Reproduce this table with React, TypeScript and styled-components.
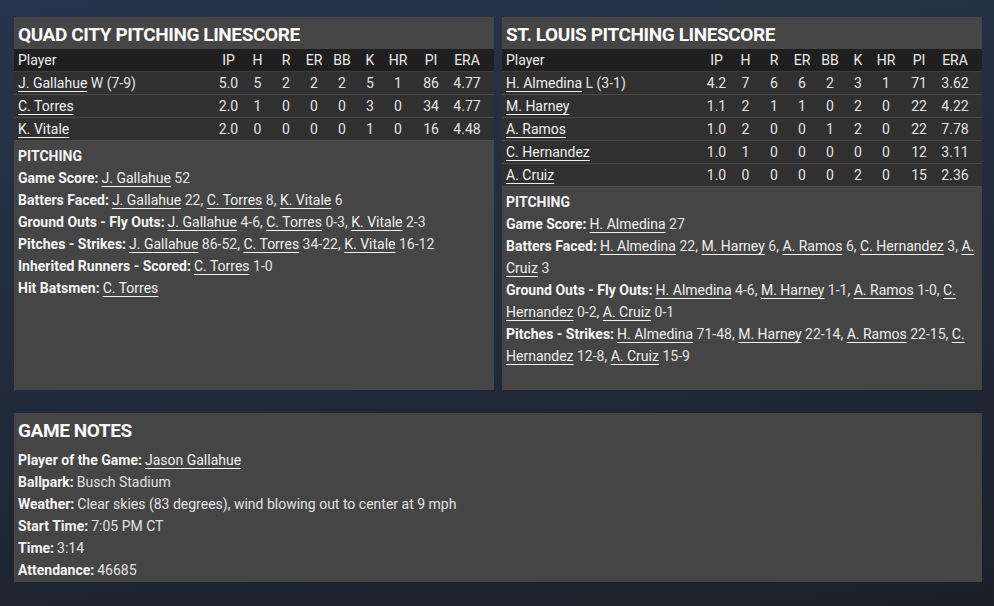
import React from 'react';
import styled, { createGlobalStyle } from 'styled-components';

const GlobalStyle = createGlobalStyle`
  html, body {
    margin: 0;
    padding: 0;
    height: 100%;
  }
  body {
    background: linear-gradient(170deg, #27344b 0%, #222c3d 45%, #1b1f27 100%);
    font-family: Roboto, "Noto Sans", sans-serif;
    color: #e4e4e4;
  }
`;

const Page = styled.div`
  width: 968px;
  padding: 17px 12px 24px 14px;
`;

const TopRow = styled.div`
  display: grid;
  grid-template-columns: 480px 480px;
  gap: 8px;
  align-items: stretch;
`;

const Panel = styled.section`
  background: #454545;
  display: flex;
  flex-direction: column;
`;

const NotesPanel = styled(Panel)`
  margin-top: 23px;
`;

const Title = styled.h2`
  margin: 0;
  height: 29px;
  line-height: 29px;
  padding: 3px 4px 0;
  font-size: 19px;
  font-weight: 700;
  color: #fafafa;
  letter-spacing: -0.4px;
`;

const StatRow = styled.div<{ $head?: boolean }>`
  display: grid;
  grid-template-columns: 1fr 29px 29px 28px 28px 28px 28px 28px 38px 34px;
  height: 22px;
  line-height: 23px;
  padding: 0 10px 0 4px;
  font-size: 14px;
  background: ${(p) => (p.$head ? '#1f1f1f' : '#303030')};
  border-bottom: 1px solid ${(p) => (p.$head ? '#3e3e3e' : '#4a4a4a')};
  color: ${(p) => (p.$head ? '#ececec' : '#e2e2e2')};
`;

const Cell = styled.span`
  text-align: center;
  white-space: nowrap;
`;

const NameCell = styled.span`
  white-space: nowrap;
`;

const PlayerLink = styled.a`
  color: #f0f0f0;
  text-decoration: underline;
  text-decoration-thickness: 1px;
  text-underline-offset: 3px;
  cursor: pointer;
`;

const Notes = styled.div<{ $bottom?: number }>`
  padding: 4px 4px ${(p) => p.$bottom ?? 0}px 4px;
  font-size: 14px;
  line-height: 22px;
`;

const Line = styled.div`
  color: #e2e2e2;
`;

const Label = styled.b`
  font-weight: 700;
  color: #f4f4f4;
  margin-right: 3px;
`;

const SectionLabel = styled.div`
  font-weight: 700;
  color: #f4f4f4;
`;

type Pitcher = {
  name: string;
  dec?: string;
  stats: string[];
};

const cols = ['IP', 'H', 'R', 'ER', 'BB', 'K', 'HR', 'PI', 'ERA'];

const quadCity: Pitcher[] = [
  { name: 'J. Gallahue', dec: 'W (7-9)', stats: ['5.0', '5', '2', '2', '2', '5', '1', '86', '4.77'] },
  { name: 'C. Torres', stats: ['2.0', '1', '0', '0', '0', '3', '0', '34', '4.77'] },
  { name: 'K. Vitale', stats: ['2.0', '0', '0', '0', '0', '1', '0', '16', '4.48'] },
];

const stLouis: Pitcher[] = [
  { name: 'H. Almedina', dec: 'L (3-1)', stats: ['4.2', '7', '6', '6', '2', '3', '1', '71', '3.62'] },
  { name: 'M. Harney', stats: ['1.1', '2', '1', '1', '0', '2', '0', '22', '4.22'] },
  { name: 'A. Ramos', stats: ['1.0', '2', '0', '0', '1', '2', '0', '22', '7.78'] },
  { name: 'C. Hernandez', stats: ['1.0', '1', '0', '0', '0', '0', '0', '12', '3.11'] },
  { name: 'A. Cruiz', stats: ['1.0', '0', '0', '0', '0', '2', '0', '15', '2.36'] },
];

type Entry = [string, string];

const List = ({ items }: { items: Entry[] }) => (
  <>
    {items.map(([name, val], i) => (
      <React.Fragment key={name + i}>
        <PlayerLink>{name}</PlayerLink>
        {val ? ` ${val}` : ''}
        {i < items.length - 1 ? ', ' : ''}
      </React.Fragment>
    ))}
  </>
);

const quadNotes: { label: string; items: Entry[] }[] = [
  { label: 'Game Score:', items: [['J. Gallahue', '52']] },
  { label: 'Batters Faced:', items: [['J. Gallahue', '22'], ['C. Torres', '8'], ['K. Vitale', '6']] },
  { label: 'Ground Outs - Fly Outs:', items: [['J. Gallahue', '4-6'], ['C. Torres', '0-3'], ['K. Vitale', '2-3']] },
  { label: 'Pitches - Strikes:', items: [['J. Gallahue', '86-52'], ['C. Torres', '34-22'], ['K. Vitale', '16-12']] },
  { label: 'Inherited Runners - Scored:', items: [['C. Torres', '1-0']] },
  { label: 'Hit Batsmen:', items: [['C. Torres', '']] },
];

const stlNotes: { label: string; items: Entry[] }[] = [
  { label: 'Game Score:', items: [['H. Almedina', '27']] },
  {
    label: 'Batters Faced:',
    items: [['H. Almedina', '22'], ['M. Harney', '6'], ['A. Ramos', '6'], ['C. Hernandez', '3'], ['A. Cruiz', '3']],
  },
  {
    label: 'Ground Outs - Fly Outs:',
    items: [['H. Almedina', '4-6'], ['M. Harney', '1-1'], ['A. Ramos', '1-0'], ['C. Hernandez', '0-2'], ['A. Cruiz', '0-1']],
  },
  {
    label: 'Pitches - Strikes:',
    items: [['H. Almedina', '71-48'], ['M. Harney', '22-14'], ['A. Ramos', '22-15'], ['C. Hernandez', '12-8'], ['A. Cruiz', '15-9']],
  },
];

const Linescore = ({
  title,
  pitchers,
  notes,
  bottom,
}: {
  title: string;
  pitchers: Pitcher[];
  notes: { label: string; items: Entry[] }[];
  bottom?: number;
}) => (
  <Panel>
    <Title>{title}</Title>
    <StatRow $head>
      <NameCell>Player</NameCell>
      {cols.map((c) => (
        <Cell key={c}>{c}</Cell>
      ))}
    </StatRow>
    {pitchers.map((p) => (
      <StatRow key={p.name}>
        <NameCell>
          <PlayerLink>{p.name}</PlayerLink>
          {p.dec ? ` ${p.dec}` : ''}
        </NameCell>
        {p.stats.map((s, i) => (
          <Cell key={i}>{s}</Cell>
        ))}
      </StatRow>
    ))}
    <Notes $bottom={bottom}>
      <SectionLabel>PITCHING</SectionLabel>
      {notes.map((n) => (
        <Line key={n.label}>
          <Label>{n.label}</Label>
          <List items={n.items} />
        </Line>
      ))}
    </Notes>
  </Panel>
);

const App = () => {
  return (
    <>
      <GlobalStyle />
      <Page>
        <TopRow>
          <Linescore title="QUAD CITY PITCHING LINESCORE" pitchers={quadCity} notes={quadNotes} />
          <Linescore title="ST. LOUIS PITCHING LINESCORE" pitchers={stLouis} notes={stlNotes} bottom={23} />
        </TopRow>
        <NotesPanel>
          <Title>GAME NOTES</Title>
          <Notes $bottom={1}>
            <Line>
              <Label>Player of the Game:</Label>
              <PlayerLink>Jason Gallahue</PlayerLink>
            </Line>
            <Line>
              <Label>Ballpark:</Label>Busch Stadium
            </Line>
            <Line>
              <Label>Weather:</Label>Clear skies (83 degrees), wind blowing out to center at 9 mph
            </Line>
            <Line>
              <Label>Start Time:</Label>7:05 PM CT
            </Line>
            <Line>
              <Label>Time:</Label>3:14
            </Line>
            <Line>
              <Label>Attendance:</Label>46685
            </Line>
          </Notes>
        </NotesPanel>
      </Page>
    </>
  );
};

export default App;
